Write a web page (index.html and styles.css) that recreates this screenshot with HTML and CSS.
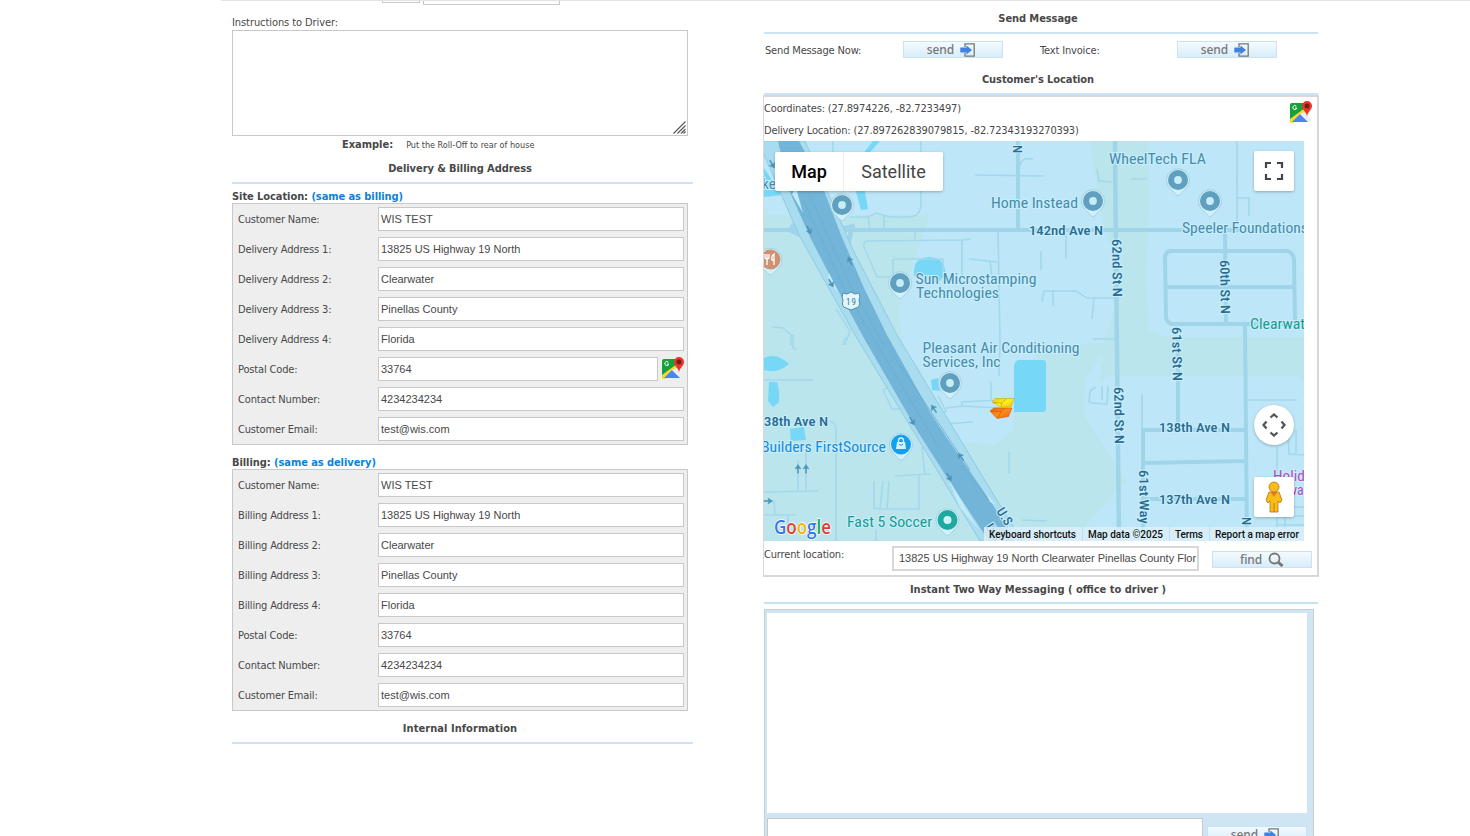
FILE: index.html
```html
<!DOCTYPE html>
<html lang="en">
<head>
<meta charset="utf-8">
<title>Job details</title>
<link rel="stylesheet" href="styles.css">
</head>
<body>
<svg class="defs" width="0" height="0">
  <defs>
    <linearGradient id="yel" x1="0" y1="0" x2="1" y2="1"><stop offset="0" stop-color="#e8c80a"/><stop offset=".5" stop-color="#fff01e"/><stop offset="1" stop-color="#efbd00"/></linearGradient>
    <linearGradient id="org" x1="0" y1="0" x2="1" y2="1"><stop offset="0" stop-color="#e06a14"/><stop offset=".5" stop-color="#ff8a1c"/><stop offset="1" stop-color="#ec5c00"/></linearGradient>
    <symbol id="gmap" viewBox="0 0 24 24">
      <path d="M3 3H20V22H3Q1 22 1 20V5Q1 3 3 3Z" fill="#f5f5f5"/>
      <path d="M3 3H17L16 9L1 22V5Q1 3 3 3Z" fill="#16a13b"/>
      <path d="M16 8L18 11L4 23H2Q1 22 1 19Z" fill="#fdd835"/>
      <path d="M11 14L19 22H3Z" fill="#4b86ef"/>
      <path d="M15 12L22 19V21L20 22L11 14Z" fill="#eceff2"/>
      <path d="M7.300 6.200A2 2 0 1 0 7.800 8H6" fill="none" stroke="#fff" stroke-width="1"/>
      <path d="M18 17C18 12 13 10 13 6A5 5 0 0 1 23 6C23 10 18 12 18 17Z" fill="#ea3529"/>
      <circle cx="18" cy="6" r="2.500" fill="#751b18"/>
    </symbol>
    <symbol id="send" viewBox="0 0 16 14">
      <path d="M5 4V.8H14.200V13.200H5V10" fill="none" stroke="#777" stroke-width="1.300"/>
      <path d="M.3 4.600H6.500V2.500L12 7L6.500 11.500V9.400H.3Z" fill="#3f82e6"/>
    </symbol>
    <symbol id="pin" viewBox="-12 -12 24 28" overflow="visible">
      <path d="M0 15.500C-2 15.500-4 12-8 8.500A11.500 11.500 0 1 1 8 8.500C4 12 2 15.500 0 15.500Z" fill="#d2f0fb" stroke="#9bc8da" stroke-width=".8"/>
      <circle r="10" fill="currentColor"/>
    </symbol>
    <symbol id="arr" viewBox="-4 -5 8 10" overflow="visible"><path d="M0 4.500V-2" fill="none" stroke="#4c94b8" stroke-width="1.500"/><path d="M-3 0L0-4.500L3 0L0-1Z" fill="#4c94b8" stroke="#4c94b8" stroke-width=".5"/></symbol>
  </defs>
</svg>
<div class="page">
  <section class="left">
    <div class="stubs"><span class="stub stub-a"></span><span class="stub stub-b"></span></div>
    <div class="instr">Instructions to Driver:</div>
    <div class="area"><svg width="13" height="13" viewBox="0 0 13 13"><path d="M.5 12.500L12.500.5M4.500 12.500L12.500 4.500M8 12.500L12.500 8M10.500 12.500L12.500 10.500" stroke="#555" stroke-width="1.100"/></svg></div>
    <div class="example"><b>Example:</b><small>Put the Roll-Off to rear of house</small></div>
    <h2 class="h-left h-addr">Delivery &amp; Billing Address</h2>
    <div class="sub sub-site">Site Location: <a>(same as billing)</a></div>
    <div class="form">
      <div class="row"><label>Customer Name:</label><div class="in">WIS TEST</div></div>
      <div class="row"><label>Delivery Address 1:</label><div class="in">13825 US Highway 19 North</div></div>
      <div class="row"><label>Delivery Address 2:</label><div class="in">Clearwater</div></div>
      <div class="row"><label>Delivery Address 3:</label><div class="in">Pinellas County</div></div>
      <div class="row"><label>Delivery Address 4:</label><div class="in">Florida</div></div>
      <div class="row"><label>Postal Code:</label><div class="in">33764</div><svg class="gm"><use href="#gmap"/></svg></div>
      <div class="row"><label>Contact Number:</label><div class="in">4234234234</div></div>
      <div class="row"><label>Customer Email:</label><div class="in">test@wis.com</div></div>
    </div>
    <div class="sub sub-bill">Billing: <a>(same as delivery)</a></div>
    <div class="form">
      <div class="row"><label>Customer Name:</label><div class="in">WIS TEST</div></div>
      <div class="row"><label>Billing Address 1:</label><div class="in">13825 US Highway 19 North</div></div>
      <div class="row"><label>Billing Address 2:</label><div class="in">Clearwater</div></div>
      <div class="row"><label>Billing Address 3:</label><div class="in">Pinellas County</div></div>
      <div class="row"><label>Billing Address 4:</label><div class="in">Florida</div></div>
      <div class="row"><label>Postal Code:</label><div class="in">33764</div></div>
      <div class="row"><label>Contact Number:</label><div class="in">4234234234</div></div>
      <div class="row"><label>Customer Email:</label><div class="in">test@wis.com</div></div>
    </div>
    <h2 class="h-left h-int">Internal Information</h2>
  </section>
  <section class="right">
    <h2 class="h-send">Send Message</h2>
    <div class="sendrow">
      <span class="s1">Send Message Now:</span><div class="btn">send<svg width="16" height="14"><use href="#send"/></svg></div>
      <span class="s2">Text Invoice:</span><div class="btn">send<svg width="16" height="14"><use href="#send"/></svg></div>
    </div>
    <h2 class="h-loc">Customer's Location</h2>
    <div class="locbox">
      <div class="coords">
        <div class="lines"><span>Coordinates: (27.8974226, -82.7233497)</span><span>Delivery Location: (27.897262839079815, -82.72343193270393)</span></div>
        <svg class="gm"><use href="#gmap"/></svg>
      </div>
      <div class="map">
        <svg class="canvas" width="540" height="400" viewBox="764 141 540 400">
          <rect x="764" y="141" width="540" height="400" fill="#bde7f8"/>
          <g fill="#bae5ed">
            <path d="M764 215H930L907 281L898 310L903 345L906 375L937 440L995 445L1013 430L1015 385L1045 345L1095 343H1115L1105 350L1085 380L1084 415L1126 481L1072 541H764Z"/>
            <path d="M1090 141H1148L1150 190L1146 280L1149 330L1165 337H1304V381L1298 376H1110L1100 380L1104 340L1114 310L1112 250L1100 210Z"/>
          </g>
          <g fill="#76d7f6">
            <path d="M873 141H880L863 160V180L868 209L861 210L854 185L858 160Z"/>
            <path d="M914 273Q913 258 929 257Q946 258 945 274L938 283L914 276Z"/>
            <path d="M1018 360H1043Q1046 360 1046 364V409Q1046 412 1042 412H1014V366Q1014 362 1018 360Z"/>
            <path d="M764 358Q776 352 789 364Q778 374 764 370ZM769 382H777Q780 390 779 402L773 407L768 401ZM790 429L804 427L806 440L791 441ZM764 168L782 195L764 197ZM931 380L938 378L940 391L932 390Z"/>
          </g>
          <g fill="none" stroke="#a3d8ec" stroke-width="1.600">
            <path d="M921 141V205Q920 217 908 217H890L876 213L868 217H850M868 217L870 230M884 215V230M833 141V175M915 230V239M864 247Q863 241 868 241L962 240L971 239M864 247L877 277H893V260L896 259H943V275M962 240V275M998 231L1000 341M969 259L997 262M990 261L993 285M975 175L1043 176M1020 166Q1021 157 1033 159M1066 234V258M1041 251V270M1042 302L1044 291H1076L1087 298H1116M1053 291V306M1094 298L1092 319M1131 179H1147M1097 169L1099 181L1113 182M1237 141V222M1237 198H1249V216M1093 339H1116M772 327L783 328L791 335V345M836 309L850 331L845 345M793 335V348L797 350M844 345V340L850 335M764 380H813M830 421Q836 423 836 430V541M883 390L889 387M883 390L892 409H903M938 396L946 411L940 415M946 408L962 406L1000 408M962 406V402L1000 400M991 382V400M944 424L973 422M1000 341L999 376M1009 452V473M922 447L925 475M895 476L930 474M874 481V508L880 509H919V476M880 509L883 481M889 481L887 509M798 460V490M806 447V490M764 492L818 491M764 501H774L775 514M764 515H796M788 515V525M876 530V541M1022 520L1047 521M1089 403L1090 391L1096 387M1090 403L1107 404L1108 386M1102 386V400M1142 394V430M1248 400H1297M1288 432L1289 454L1304 455M1296 430V453M1277 447V478M1277 505V541M1285 505V541M1290 507H1304M1290 516H1304M1277 525H1304M1277 532H1304"/>
          </g>
          <g fill="none" stroke="#a0d5e9" stroke-width="4">
            <path d="M764 230H1240M1018 141V230"/>
            <path d="M1115 141L1116 260L1117 350L1119 541" stroke-width="4.500"/>
            <path d="M1170 251H1288Q1294 254 1294 260L1295 320Q1292 326 1285 324L1172 324Q1166 322 1166 317L1165 258Q1165 252 1170 251ZM1166 287H1294M1225 232L1226 324M1245 324L1247 541M1178 337V428M1143 541V430H1245M1143 463L1245 461M1143 499H1245"/>
          </g>
          <path d="M790 230L798 220M790 230L803 236M842 229L855 226M851 232L848 244" fill="none" stroke="#a0d5e9" stroke-width="5"/>
          <path d="M758 141L799 235L855 335L980 541H1025L1015 530L897 335L854 252L805 141Z" fill="#a9dcef" stroke="#8ecbe2" stroke-width="1"/>
          <path d="M778 141H799L820 180L841 235L864 288L887 335L930 412L947 438L993 505L1014 541H989L957 493L918 432L865 340L827 270L811 239L789 190Z" fill="#73b5d9"/>
          <g fill="none" stroke="#69acd1" stroke-width=".8"><path d="M787 150L812 200L850 285L884 345M803 200L845 290L940 450M893 355L970 470M961 465L990 502"/></g>
          <path d="M796 188L803 213L792 194ZM829 273L838 292L828 280ZM948 478L979 530L960 508ZM986 493L996 505L990 502Z" fill="#c1eafa"/>
          <g>
            <use href="#arr" width="8" height="10" x="-4" y="-5" transform="translate(772 164) rotate(150)"/><use href="#arr" width="8" height="10" x="-4" y="-5" transform="translate(809 230) rotate(155)"/><use href="#arr" width="8" height="10" x="-4" y="-5" transform="translate(831 283) rotate(150)"/><use href="#arr" width="8" height="10" x="-4" y="-5" transform="translate(850 261) rotate(-25)"/><use href="#arr" width="8" height="10" x="-4" y="-5" transform="translate(912 421) rotate(150)"/><use href="#arr" width="8" height="10" x="-4" y="-5" transform="translate(934 409) rotate(-35)"/><use href="#arr" width="8" height="10" x="-4" y="-5" transform="translate(949 477) rotate(150)"/><use href="#arr" width="8" height="10" x="-4" y="-5" transform="translate(961 457) rotate(-35)"/><use href="#arr" width="8" height="10" x="-4" y="-5" transform="translate(798 469)"/><use href="#arr" width="8" height="10" x="-4" y="-5" transform="translate(806 469)"/><use href="#arr" width="8" height="10" x="-4" y="-5" transform="translate(768 501) rotate(90)"/>
          </g>
          <path d="M843 293L847 294L851 292L855 294L859 293L860 297L859 300Q861 307 856 308L851 310L846 308Q841 307 843 300L842 297Z" fill="#e2f5fa" stroke="#4f8da9"/>
          <text class="lab" x="846" y="305" font-size="9" textLength="10" fill="#3d7b9b">19</text>
          <g color="#609fbd">
            <use href="#pin" x="830" y="193" width="24" height="28"/><use href="#pin" x="888" y="271" width="24" height="28"/><use href="#pin" x="1081" y="189" width="24" height="28"/><use href="#pin" x="1166" y="168" width="24" height="28"/><use href="#pin" x="1198" y="189" width="24" height="28"/><use href="#pin" x="938" y="371" width="24" height="28"/>
            <g fill="#c5edfa"><circle cx="842" cy="205" r="3.900"/><circle cx="900" cy="283" r="3.900"/><circle cx="1093" cy="201" r="3.900"/><circle cx="1178" cy="180" r="3.900"/><circle cx="1210" cy="201" r="3.900"/><circle cx="950" cy="383" r="3.900"/></g>
          </g>
          <use href="#pin" color="#1caaa0" x="935.500" y="508" width="24" height="28"/><circle cx="947.500" cy="520" r="4" fill="#d0f2f4"/>
          <use href="#pin" color="#159fec" x="889" y="432.500" width="24" height="28"/>
          <path d="M897 442H905L906 449H896Z" fill="#d6f2fd"/><path d="M898.500 442V440.500A2.500 2.500 0 0 1 903.500 440.500V442" fill="none" stroke="#d6f2fd" stroke-width="1.300"/><path d="M899 444Q901 447 903 444" fill="none" stroke="#159fec"/>
          <use href="#pin" color="#cc9272" x="758.500" y="247.500" width="24" height="28"/>
          <path d="M765 254V258Q767 260 769 258V254M767 254V265M774 265V254Q771 256 772 260H774" fill="none" stroke="#fff" stroke-width="1.300"/>
          <g class="lab poi" font-size="14">
            <text x="1109" y="163.500" textLength="97" lengthAdjust="spacingAndGlyphs">WheelTech FLA</text><text x="991" y="208" textLength="87" lengthAdjust="spacingAndGlyphs">Home Instead</text><text x="1182" y="232.500" textLength="126" lengthAdjust="spacingAndGlyphs">Speeler Foundations</text>
            <text x="915.500" y="283.500" textLength="121" lengthAdjust="spacingAndGlyphs">Sun Microstamping</text><text x="916" y="297.500" textLength="83" lengthAdjust="spacingAndGlyphs">Technologies</text>
            <text x="922.500" y="353" textLength="157" lengthAdjust="spacingAndGlyphs">Pleasant Air Conditioning</text><text x="922.500" y="367" textLength="78" lengthAdjust="spacingAndGlyphs">Services, Inc</text>
            <text x="762" y="189" textLength="14" lengthAdjust="spacingAndGlyphs">ke</text>
            <text x="1250" y="329" textLength="55" lengthAdjust="spacingAndGlyphs" fill="#169c91">Clearwat</text>
            <text x="847" y="527" textLength="85" lengthAdjust="spacingAndGlyphs" fill="#169c91">Fast 5 Soccer</text>
            <text x="761" y="451.500" textLength="125" lengthAdjust="spacingAndGlyphs" fill="#168bdc">Builders FirstSource</text>
            <text x="1273" y="481" textLength="32" lengthAdjust="spacingAndGlyphs" fill="#b54bc0">Holid</text><text x="1288" y="495" fill="#b54bc0">wa</text>
          </g>
          <g class="lab road" font-size="13">
            <text x="1029" y="234.500" textLength="74" lengthAdjust="spacingAndGlyphs">142nd Ave N</text><text x="1159" y="431.500" textLength="71" lengthAdjust="spacingAndGlyphs">138th Ave N</text><text x="1159" y="504" textLength="71" lengthAdjust="spacingAndGlyphs">137th Ave N</text><text x="764" y="425.500" textLength="64" lengthAdjust="spacingAndGlyphs">38th Ave N</text>
            <text transform="translate(1112 239) rotate(89)" textLength="58" lengthAdjust="spacingAndGlyphs">62nd St N</text><text transform="translate(1114 387) rotate(89)" textLength="57" lengthAdjust="spacingAndGlyphs">62nd St N</text>
            <text transform="translate(1220 260) rotate(89)" textLength="54" lengthAdjust="spacingAndGlyphs">60th St N</text><text transform="translate(1172 327) rotate(89)" textLength="54" lengthAdjust="spacingAndGlyphs">61st St N</text>
            <text transform="translate(1139 470) rotate(89)" textLength="54" lengthAdjust="spacingAndGlyphs">61st Way</text><text transform="translate(1022 153) rotate(-90)">N</text><text transform="translate(1251 525) rotate(-90)">N</text>
            <text transform="translate(996 511) rotate(58)" textLength="22" lengthAdjust="spacingAndGlyphs">U.S.</text><text transform="translate(985 527) rotate(58)">U.S.</text>
          </g>
          <g stroke-width=".6" stroke-linejoin="round">
            <path d="M990 411L994 408L1012 408L1008.500 416.500L997 418.500Z" fill="url(#org)" stroke="#d86000"/>
            <path d="M990.500 411L1001 411.500L998 418M1001 411.500L1004 408.500" fill="none" stroke="#c85000"/>
            <path d="M992 402L995.500 398.500H1014L1011 406.500L1001 407.500L997 404.500Z" fill="url(#yel)" stroke="#d0aa00"/>
            <path d="M993 402.500L1002 403L1001 407M1002 403L1006 399" fill="none" stroke="#b09000"/>
          </g>
          <text class="google" x="774" y="534" textLength="57" lengthAdjust="spacingAndGlyphs"><tspan fill="#3578e5">G</tspan><tspan fill="#df3e33">o</tspan><tspan fill="#f5b400">o</tspan><tspan fill="#3578e5">g</tspan><tspan fill="#23a455">l</tspan><tspan fill="#df3e33">e</tspan></text>
          <rect x="984" y="527" width="320" height="14" fill="#dceff8" opacity=".85"/>
          <path d="M1082.500 527V541M1169.500 527V541M1209.500 527V541" stroke="#b9e3f4"/>
          <g class="credit"><text x="989" y="538" textLength="87">Keyboard shortcuts</text><text x="1088" y="538" textLength="75">Map data ©2025</text><text x="1175" y="538" textLength="28">Terms</text><text x="1215" y="538" textLength="84">Report a map error</text></g>
        </svg>
        <div class="types"><span class="on">Map</span><span class="sat">Satellite</span></div>
        <div class="ctl full"><svg width="20" height="20" viewBox="0 0 20 20"><path d="M2 7V2H7M13 2H18V7M18 13V18H13M7 18H2V13" fill="none" stroke="#444" stroke-width="2.200"/></svg></div>
        <div class="ctl move"><svg width="24" height="24" viewBox="0 0 24 24"><path d="M8.500 4.500L12 1.500L15.500 4.500M8.500 19.500L12 22.500L15.500 19.500M4.500 8.500L1.500 12L4.500 15.500M19.500 8.500L22.500 12L19.500 15.500" fill="none" stroke="#555" stroke-width="2.300"/></svg></div>
        <div class="ctl man"><svg width="20" height="32" viewBox="0 0 20 32"><path d="M5 11H15L18 19L16 22L14 20V31H6V20L4 22L2 19Z" fill="#fbbc18" stroke="#a2781f" stroke-width=".8"/><path d="M6.500 11H13.500L10 16Z" fill="#e87b27"/><circle cx="10" cy="6" r="5" fill="#fbbc18" stroke="#a2781f" stroke-width=".8"/><path d="M10 22V31" stroke="#b57c13"/></svg></div>
      </div>
      <div class="cur"><span>Current location:</span><div class="curin">13825 US Highway 19 North Clearwater Pinellas County Flor</div><div class="btn find">find<svg width="16" height="15" viewBox="0 0 16 15"><circle cx="6.500" cy="6.500" r="5" fill="none" stroke="#777" stroke-width="1.800"/><path d="M10 10L14.500 14" stroke="#777" stroke-width="3"/></svg></div></div>
    </div>
    <h2 class="h-msg">Instant Two Way Messaging ( office to driver )</h2>
    <div class="msg">
      <div class="log"></div>
      <div class="compose"><div class="mi"></div><div class="btn">send<svg width="16" height="14"><use href="#send"/></svg></div></div>
    </div>
  </section>
</div>
</body>
</html>
```
FILE: styles.css
```css
* { box-sizing: border-box; }
html, body { margin: 0; }
body { height: 836px; overflow: hidden; background: #fff; color: #484848; font: 11px/14px "DejaVu Sans Condensed", "DejaVu Sans", sans-serif; font-stretch: condensed; letter-spacing: -.16px; white-space: nowrap; }
.defs { position: absolute; }
svg { display: block; flex: none; }
.page { margin-left: 221px; padding-left: 11px; border-top: 1px solid #e3e3e3; height: 836px; overflow: hidden; display: flex; align-items: flex-start; gap: 70px; }
.left { width: 461px; }
.right { width: 555px; }
h2 { margin: 0; font-size: 11px; line-height: 14px; font-weight: bold; text-align: center; border-bottom: 2px solid #cbe4f5; letter-spacing: -.08px; }

.stubs { height: 14px; padding-left: 150px; display: flex; gap: 3px; align-items: flex-start; margin-top: -1px; }
.stub { border: 1px solid #c8c8c8; border-top: 0; background: #fff; }
.stub-a { width: 38px; height: 3px; }
.stub-b { width: 137px; height: 5px; }
.instr { height: 16px; line-height: 18px; letter-spacing: -.08px; }
.area { width: 456px; height: 106px; border: 1px solid #c8c8c8; display: flex; justify-content: flex-end; align-items: flex-end; padding: 1px; }
.example { height: 20px; line-height: 18px; padding-left: 110px; display: flex; gap: 13px; }
.example b { letter-spacing: -.02px; }
.example small { font-size: 9px; line-height: 19px; letter-spacing: 0; }
.h-left { padding-right: 5px; }
.h-addr { height: 28px; padding-top: 6px; }
.h-int { height: 33px; padding-top: 11px; letter-spacing: .05px; }
.sub { font-weight: bold; letter-spacing: -.07px; }
.sub a { color: #0d82d8; }
.sub-site { height: 19px; padding-top: 6px; }
.sub-bill { height: 24px; padding-top: 11px; }
.form { width: 456px; height: 242px; background: #eee; border: 1px solid #c8c8c8; padding: 3px 3px 0 5px; display: flex; flex-direction: column; gap: 6px; }
.row { height: 24px; display: flex; align-items: center; }
.row label { width: 140px; flex: none; padding-top: 2px; }
.in { flex: 1; height: 24px; border: 1px solid #c8c8c8; background: #fff; padding-left: 2px; line-height: 22px; font-family: "Liberation Sans", Arial, sans-serif; letter-spacing: 0; }
.gm { width: 24px; height: 24px; }
.row .gm { margin-left: 3px; margin-right: -1px; margin-top: -2px; }

.h-send { height: 33px; padding-top: 11px; padding-right: 6px; margin-left: 1px; }
.sendrow { height: 33px; display: flex; align-items: center; padding: 0 0 0 2px; }
.s1 { width: 138px; }
.s2 { width: 137px; margin-left: 37px; }
.btn { width: 100px; height: 17px; flex: none; border: 1px solid #c9e3f2; background: linear-gradient(#f4fafe, #d8edf9); color: #777; display: flex; align-items: center; justify-content: center; gap: 6px; font: 500 12px/13px "Noto Sans", sans-serif; letter-spacing: -.1px; padding-bottom: 1px; }
.btn svg { margin-top: 1px; }
.sendrow .btn { padding-right: 3px; margin-top: -2px; }
.h-loc { height: 28px; padding-top: 6px; padding-right: 6px; margin-left: 1px; }
.locbox { width: 556px; height: 482px; border: 2px solid #d8d8d8; border-left-width: 1px; }
.coords { height: 44px; display: flex; justify-content: space-between; padding: 3px 4px 0 0; }
.lines { display: flex; flex-direction: column; gap: 8px; padding-top: 2px; }
.map { position: relative; width: 540px; height: 400px; overflow: hidden; }
.lab { font-family: Roboto, sans-serif; letter-spacing: 0; }
.poi { fill: #468bac; stroke: #c9eefa; stroke-width: 2px; paint-order: stroke; }
.road { fill: #286b91; stroke: #c9eefa; stroke-width: 2px; paint-order: stroke; font-weight: 500; }
.credit { font: 500 10px Roboto, sans-serif; fill: #111; letter-spacing: 0; }
.google { font: 600 20px "Open Sans", Lato, sans-serif; letter-spacing: 0; stroke: #fff; stroke-width: 1.5px; paint-order: stroke; }
.types { position: absolute; left: 11px; top: 11px; width: 168px; height: 39px; background: #fff; border-radius: 2px; box-shadow: 0 1px 3px #0004; display: flex; align-items: center; font: 18px/39px Roboto, sans-serif; letter-spacing: 0; }
.on { width: 69px; text-align: center; border-right: 1px solid #eee; font-weight: 500; color: #000; }
.sat { flex: 1; text-align: center; color: #444; }
.ctl { position: absolute; left: 490px; width: 40px; height: 40px; background: #fff; border-radius: 2px; box-shadow: 0 1px 3px #0004; display: flex; align-items: center; justify-content: center; }
.full { top: 10px; }
.move { top: 264px; border-radius: 50%; }
.man { top: 336px; }
.cur { height: 33px; display: flex; }
.cur > span { width: 128px; padding-top: 7px; }
.curin { width: 307px; height: 25px; margin-top: 5px; border: 2px solid #d8d8d8; padding-left: 5px; line-height: 21px; font-family: "Liberation Sans", Arial, sans-serif; letter-spacing: 0; overflow: hidden; }
.find { margin: 10px 0 0 13px; }
.h-msg { height: 27px; padding-top: 6px; padding-right: 6px; margin-left: 1px; border-color: #c4e2f5; letter-spacing: 0; }
.msg { width: 550px; height: 240px; margin: 5px 0 0 1px; background: #cfe5f3; border: 1px solid #c9ced2; padding: 3px 6px 0 2px; }
.log { height: 200px; background: #fff; }
.compose { display: flex; gap: 4px; margin-top: 5px; }
.mi { width: 436px; height: 40px; border: 1px solid #c8c8c8; background: #fff; }
.compose .btn { margin-top: 8px; padding-right: 3px; }
```
